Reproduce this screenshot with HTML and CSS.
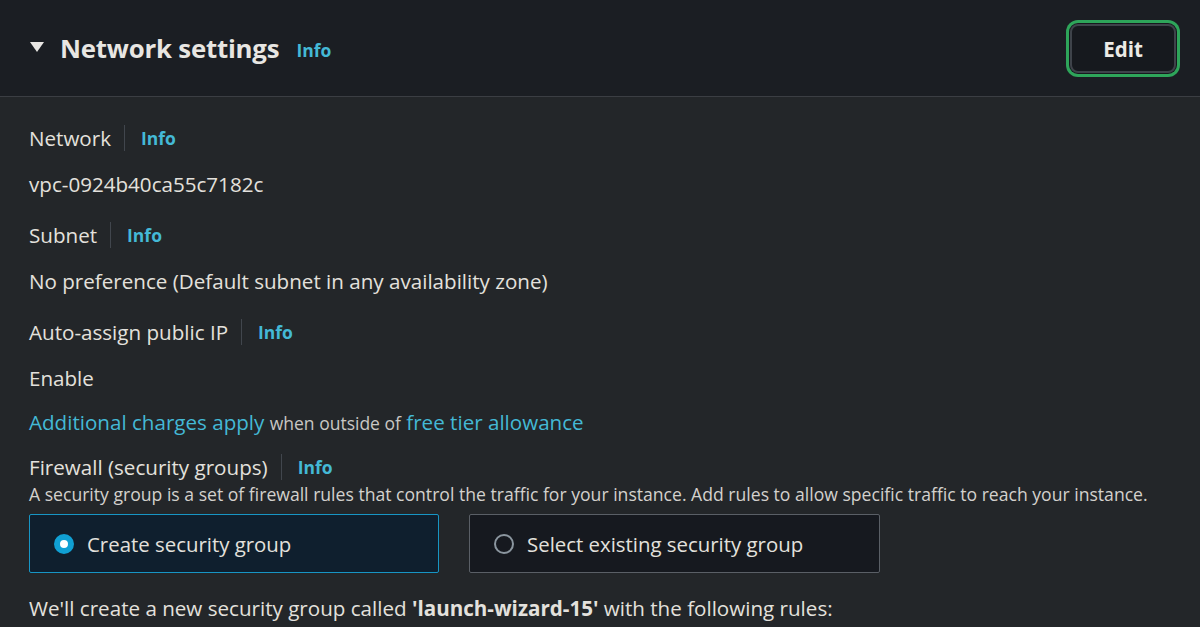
FILE: index.html
```html
<!DOCTYPE html>
<html lang="en">
<head>
<meta charset="utf-8">
<title>Network settings</title>
<link rel="stylesheet" href="styles.css">
</head>
<body>
<section class="panel">
  <header class="panel-header">
    <div class="title-wrap">
      <span class="caret"></span>
      <h2 class="title">Network settings</h2>
      <a class="info info-title">Info</a>
    </div>
    <button class="edit-btn">Edit</button>
  </header>
  <div class="panel-body">
    <div class="field">
      <div class="label-row"><span class="label">Network</span><span class="sep"></span><a class="info">Info</a></div>
      <div class="value">vpc-0924b40ca55c7182c</div>
    </div>
    <div class="field">
      <div class="label-row"><span class="label">Subnet</span><span class="sep"></span><a class="info">Info</a></div>
      <div class="value">No preference (Default subnet in any availability zone)</div>
    </div>
    <div class="field">
      <div class="label-row"><span class="label">Auto-assign public IP</span><span class="sep"></span><a class="info">Info</a></div>
      <div class="value">Enable</div>
      <div class="value charges"><a class="link">Additional charges apply</a> <span class="small">when outside of</span> <a class="link">free tier allowance</a></div>
    </div>
    <div class="field firewall">
      <div class="fw-head">
        <div class="label-row"><span class="label">Firewall (security groups)</span><span class="sep"></span><a class="info">Info</a></div>
        <div class="desc">A security group is a set of firewall rules that control the traffic for your instance. Add rules to allow specific traffic to reach your instance.</div>
      </div>
      <div class="cards">
        <label class="card selected"><span class="radio on"></span><span>Create security group</span></label>
        <label class="card"><span class="radio"></span><span>Select existing security group</span></label>
      </div>
      <div class="value note">We'll create a new security group called <b>'launch-wizard-15'</b> with the following rules:</div>
    </div>
  </div>
</section>
</body>
</html>
```

FILE: styles.css
```css
html, body {
  margin: 0;
  padding: 0;
}
body {
  background: #232629;
  font-family: "Open Sans", "Lato", sans-serif;
  color: #e3e1dd;
  width: 1200px;
  height: 627px;
  overflow: hidden;
}
.panel-header {
  height: 97px;
  background: #1b1e23;
  border-bottom: 1px solid #3b3e43;
  display: flex;
  align-items: center;
  justify-content: space-between;
  padding: 0 24px 0 30px;
  box-sizing: border-box;
}
.title-wrap {
  display: flex;
  align-items: center;
}
.caret {
  width: 0;
  height: 0;
  border-left: 7px solid transparent;
  border-right: 7px solid transparent;
  border-top: 10px solid #e8e6e3;
  margin-right: 16px;
  margin-top: -2px;
}
.title {
  margin: 0;
  font-size: 25.8px;
  font-weight: 700;
  color: #e8e6e2;
  line-height: 30px;
  letter-spacing: -0.2px;
}
.info {
  color: #44b9d6;
  font-weight: 700;
  font-size: 17.5px;
  text-decoration: none;
}
.info-title {
  margin-left: 17px;
  margin-top: 3px;
}
.edit-btn {
  width: 106px;
  height: 49px;
  background: #16191e;
  border: 2px solid #3e434a;
  border-radius: 8px;
  color: #eceae6;
  font-family: inherit;
  font-size: 20.5px;
  font-weight: 700;
  box-shadow: 0 0 0 1px #16191e, 0 0 0 4px #2ea55a;
  margin-top: 1px;
}
.panel-body {
  padding: 29px 29px 0 29px;
  display: flex;
  flex-direction: column;
  gap: 27px;
}
.field {
  display: flex;
  flex-direction: column;
  gap: 22px;
}
.label-row {
  display: flex;
  align-items: center;
  height: 24px;
}
.label, .value {
  font-size: 20.6px;
  line-height: 24px;
}
.sep {
  width: 1px;
  height: 26px;
  background: #41464d;
  margin: 0 16px 0 13px;
}
.charges {
  margin-top: -2px;
}
.link {
  color: #44b9d6;
}
.small {
  font-size: 17.5px;
  color: #c9c7c3;
}
.firewall {
  gap: 10px;
  margin-top: -7px;
}
.fw-head {
  display: flex;
  flex-direction: column;
  gap: 5px;
}
.desc {
  font-size: 17.6px;
  line-height: 20px;
  color: #d3d1cd;
}
.cards {
  display: flex;
  gap: 30px;
}
.card {
  width: 411px;
  height: 59px;
  box-sizing: border-box;
  border: 1px solid #5a5f66;
  border-radius: 2px;
  background: #16191f;
  display: flex;
  align-items: center;
  padding-left: 24px;
  gap: 13px;
  font-size: 20.4px;
}
.card.selected {
  background: #0f1f2e;
  border-color: #1795c4;
  width: 410px;
}
.radio {
  width: 20px;
  height: 20px;
  border-radius: 50%;
  box-sizing: border-box;
  border: 2px solid #8b969f;
}
.radio.on {
  border: 6px solid #10a0d4;
  background: #ffffff;
}
.note {
  margin-top: 13px;
}
.note b {
  font-weight: 700;
}
```
